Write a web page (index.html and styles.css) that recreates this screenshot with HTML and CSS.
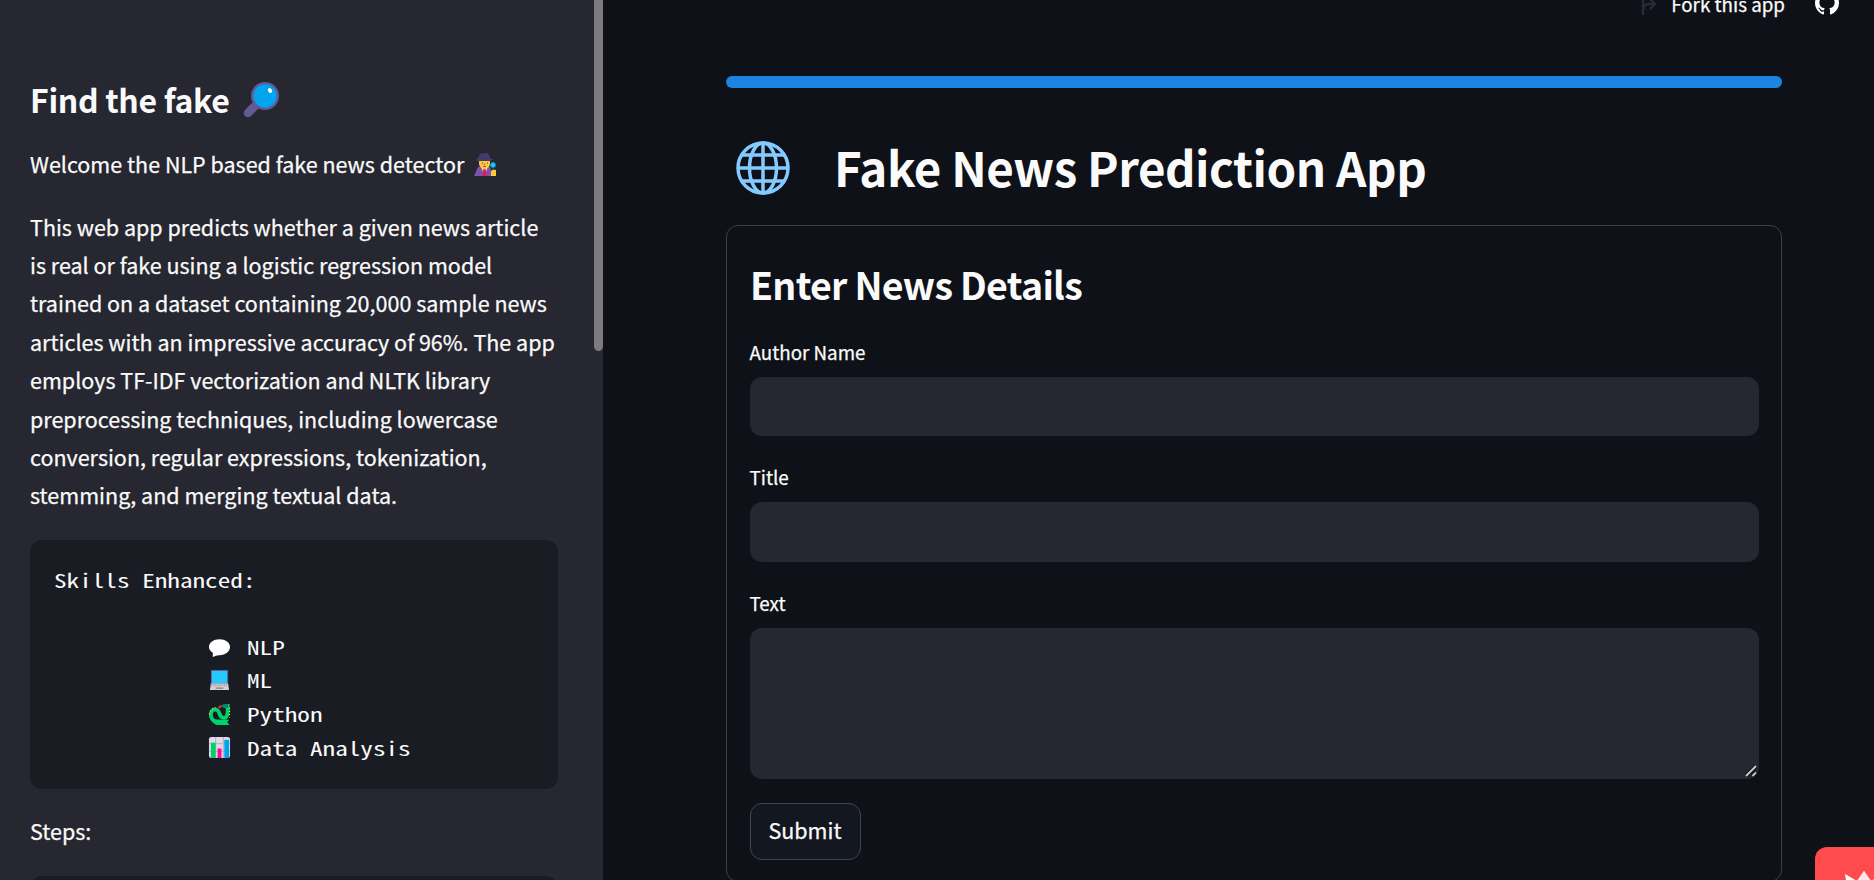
FILE: index.html
```html
<!DOCTYPE html>
<html lang="en">
<head>
<meta charset="utf-8">
<title>Fake News Prediction App</title>
<link rel="stylesheet" href="styles.css">
</head>
<body>
<div class="app">
  <aside class="sidebar">
    <h2 class="side-title"><span>Find the fake</span>
      <svg class="lens" viewBox="0 0 36 36"><path d="M5 31L14 22" stroke="#635994" stroke-width="8.500" stroke-linecap="round"/><circle cx="22" cy="14" r="14" fill="#635994"/><circle cx="22" cy="14" r="11.700" fill="#00a6ed"/><ellipse cx="27" cy="8.500" rx="1.900" ry="2.700" transform="rotate(-30 27 8.500)" fill="#fff"/></svg>
    </h2>
    <p class="welcome"><span>Welcome the NLP based fake news detector</span>
      <svg class="detective" viewBox="0 0 22 24"><path d="M0 23L3 16Q4 13 8 13H14Q17 14 17 18V23Z" fill="#7d52ad"/><path d="M7 13L10.500 23L14 13Z" fill="#f4edf8"/><path d="M9.500 15h2l1 8h-4z" fill="#e21b55"/><path d="M5 6h11v5q-1 5-5.500 5T5 11z" fill="#ffc83d"/><path d="M2 7Q5 5 5 3Q6 0 8 0Q10 1 11 0Q15-1 16 4Q16 6 19 6Q19 8 13 8H5Q2 8 2 7Z" fill="#433b6b"/><path d="M8 10h1m4 0h1" stroke="#433b6b"/><circle cx="10.500" cy="11.500" r="1" fill="#d67d00"/><path d="M9 13.500h3" stroke="#c85720"/><circle cx="19" cy="12" r="2.500" fill="#26c9fc" stroke="#008ebf"/><path d="M19 15v3" stroke="#433b6b" stroke-width="1.500"/><path d="M17 18q2-2 5-1v6h-5z" fill="#ffc83d"/></svg>
    </p>
    <p class="about">This web app predicts whether a given news article<br>is real or fake using a logistic regression model<br>trained on a dataset containing 20,000 sample news<br>articles with an impressive accuracy of 96%. The app<br>employs TF-IDF vectorization and NLTK library<br>preprocessing techniques, including lowercase<br>conversion, regular expressions, tokenization,<br>stemming, and merging textual data.</p>
    <div class="code">
      <div class="code-head"><span class="mono">Skills Enhanced:</span></div>
      <ul class="skills">
        <li><svg class="emoji" viewBox="0 0 24 24"><path d="M12 3.500C18 3.500 23 7 23 11.500S18 20 12 20Q9 20 7 21L5 22V17.500Q1 15 1 11.500C1 7 6 3.500 12 3.500Z" fill="#fff"/></svg><span class="mono">NLP</span></li>
        <li><svg class="emoji" viewBox="0 0 24 24"><rect x="3" y="1" width="18" height="15" fill="#635994"/><rect x="4" y="2" width="16" height="13" fill="#26c9fc"/><path d="M3 15h18l1 7H2z" fill="#d3d3d3"/><path d="M3 17h18" stroke="#9b9b9b" stroke-width="2" stroke-dasharray="1 1"/><path d="M8 20h8" stroke="#888" stroke-width="1.500"/></svg><span class="mono">ML</span></li>
        <li><svg class="emoji" viewBox="0 0 24 24"><path d="M13 19.500H11C5 19.500 3 16 3 12.500C3 8 6 6 9 7C13 8.500 11 15 16 15.500C20 15.500 20.500 12 20.500 9V3H16" fill="none" stroke="#00d26a" stroke-width="4"/><path d="M9 17.500H22L20 20L22.500 23H12Q7 23 5 20Z" fill="#00d26a"/><path d="M13 4L16 1H21V5Z" fill="#008463"/><path d="M14 3L11 5" stroke="#f8312f" stroke-width="2"/><path d="M22.500 5v10M1.500 12Q2 6 8 5" fill="none" stroke="#fcd53f" stroke-width="1.200" stroke-dasharray="1.200 2"/></svg><span class="mono">Python</span></li>
        <li><svg class="emoji" viewBox="0 0 24 24"><rect x="1" y="1" width="22" height="22" rx="2.500" fill="#e1d8ec"/><path d="M8 1v22M16 1v22M1 8h22M1 16h22" stroke="#b4acbc"/><path d="M3 7h5v16H3z" fill="#00d26a"/><path d="M10 13h4v10h-4z" fill="#f70a8d"/><path d="M17 4h5v19h-5z" fill="#00a6ed"/></svg><span class="mono">Data Analysis</span></li>
      </ul>
    </div>
    <p class="steps">Steps:</p>
    <div class="code code-next"></div>
    <div class="scroll-thumb"></div>
  </aside>
  <main class="main">
    <header class="toolbar">
      <svg class="fork" viewBox="0 0 16 24"><path d="M2 24V4M2 21Q2 13 8 13H13M9 8l5 5-5 5" fill="none" stroke="#292b34" stroke-width="2.400"/></svg>
      <span class="fork-label">Fork this app</span>
      <svg class="github" viewBox="0 0 16 16"><path fill="#fff" d="M8 0C3.580 0 0 3.580 0 8c0 3.540 2.290 6.530 5.470 7.590.4.070.55-.17.55-.38 0-.19-.01-.82-.01-1.490-2.010.37-2.530-.49-2.690-.94-.09-.23-.48-.94-.82-1.130-.28-.15-.68-.52-.01-.53.63-.01 1.080.58 1.230.82.72 1.210 1.870.87 2.330.66.07-.52.28-.87.51-1.070-1.780-.2-3.640-.89-3.640-3.950 0-.87.31-1.590.82-2.150-.08-.2-.36-1.020.08-2.120 0 0 .67-.21 2.200.82.64-.18 1.320-.27 2-.27s1.360.09 2 .27c1.530-1.040 2.200-.82 2.200-.82.44 1.100.16 1.920.08 2.120.51.56.82 1.270.82 2.150 0 3.070-1.870 3.750-3.650 3.950.29.25.54.73.54 1.480 0 1.070-.01 1.930-.01 2.200 0 .21.15.46.55.38A8.010 8.010 0 0 0 16 8c0-4.420-3.580-8-8-8z"/></svg>
    </header>
    <div class="content">
      <div class="progress"></div>
      <div class="hero">
        <svg class="globe" viewBox="0 0 54 54" fill="none" stroke="#83cbff" stroke-width="3.500"><circle cx="27" cy="27" r="25"/><ellipse cx="27" cy="27" rx="13.500" ry="25"/><path d="M27 2v50M2 27h50M6 14h42M6 40h42"/></svg>
        <h1 class="title">Fake News Prediction App</h1>
      </div>
      <form class="form">
        <h2 class="form-title">Enter News Details</h2>
        <label class="label" for="author">Author Name</label>
        <input class="field" id="author">
        <label class="label" for="title">Title</label>
        <input class="field field-title" id="title">
        <label class="label" for="text">Text</label>
        <div class="area-wrap">
          <textarea class="field area" id="text"></textarea>
          <svg class="grip" viewBox="0 0 12 12"><path d="M1 11L11 1M7.500 11L11 7.500" stroke="#0e1117" stroke-width="4"/><path d="M1 11L11 1M7.500 11L11 7.500" stroke="#c9c9cb" stroke-width="1.900"/></svg>
        </div>
        <button class="submit" type="button">Submit</button>
      </form>
    </div>
  </main>
  <div class="badge"><svg class="crown" viewBox="0 0 60 40"><path d="M0 3L12 10L19 0L26 10L38 3L34 40H6Z" fill="#fff"/><path d="M12 10L19 0L26 10L24 40H14Z" fill="#ffe3e8"/></svg></div>
</div>
</body>
</html>
```
FILE: styles.css
```css
* { box-sizing: border-box; }
body {
  margin: 0;
  overflow: hidden;
  background: #0e1117;
  color: #fafafa;
  font-family: "Source Sans Pro", "Noto Sans CJK SC", sans-serif;
  font-size: 21.5px;
  -webkit-text-stroke: 0.25px currentColor;
}
h1, h2, p, ul { margin: 0; padding: 0; }
h1, h2 { -webkit-text-stroke: 0; }
svg { display: block; flex: none; }
.app { position: relative; display: flex; width: 1874px; height: 880px; overflow: hidden; }
.sidebar {
  position: relative;
  width: 603px;
  height: 880px;
  flex: none;
  overflow: hidden;
  padding: 78px 45px 0 30px;
  background: #262730;
  white-space: nowrap;
}
.side-title { display: flex; align-items: center; gap: 14px; height: 43px; font-size: 32px; font-weight: 600; line-height: 43px; letter-spacing: -0.33px; }
.lens { width: 36px; height: 36px; margin-top: 1px; }
.welcome { display: flex; align-items: center; gap: 10px; height: 38px; margin-top: 24px; line-height: 38px; }
.detective { width: 22px; height: 24px; margin-top: 2px; }
.about { margin-top: 24.5px; line-height: 38.4px; }
.code {
  height: 249px;
  margin-top: 25.3px;
  padding: 24px;
  border-radius: 12px;
  background: #1a1c24;
  font-family: "Noto Sans Mono CJK SC", "DejaVu Sans Mono", monospace;
  font-size: 19.2px;
  line-height: 33.6px;
}
/* Widens the half-width Latin glyphs to a 12.6px advance */
.mono { display: inline-block; transform: scaleX(1.3125); transform-origin: 0 50%; -webkit-text-stroke: 0; }
.code-head { height: 66.8px; }
.skills { list-style: none; }
.skills li { display: flex; align-items: center; gap: 16px; height: 33.6px; padding-left: 154px; }
.emoji { width: 23px; height: 23px; margin-top: -1px; }
.steps { height: 38px; margin-top: 23px; line-height: 38px; }
.code-next { margin-top: 26px; }
.scroll-thumb { position: absolute; top: 0; right: 0; width: 9px; height: 351px; border-radius: 0 0 5px 5px; background: #7c7b80; }
.main { flex: 1; padding: 0 35px 0 123px; }
.toolbar { display: flex; justify-content: flex-end; align-items: flex-start; height: 76px; font-size: 18.8px; line-height: 28px; }
.toolbar > * { position: relative; top: -9px; }
.toolbar > .fork-label { top: -10px; }
.fork { width: 16px; height: 24px; margin-right: 14px; }
.github { width: 24px; height: 24px; margin-left: 30px; }
.content { width: 1056px; }
.progress { height: 12px; border-radius: 6px; background: #1c83e1; }
.hero { display: flex; align-items: center; height: 137px; padding: 23px 0 0 10px; }
.globe { width: 54px; height: 54px; margin-bottom: 1px; }
.title { margin: 0 0 2px 44px; font-size: 47.5px; font-weight: 600; line-height: 64px; letter-spacing: -0.48px; white-space: nowrap; }
.form { height: 657px; padding: 34px 23px 0; border: 1px solid #3d4044; border-radius: 12px; }
.form-title { height: 48px; margin-bottom: 26px; font-size: 37.5px; font-weight: 600; line-height: 48px; letter-spacing: -0.72px; }
.label { display: block; height: 36px; margin: 0 0 7px -0.5px; font-size: 18.8px; line-height: 36px; }
.field { display: block; width: 1009px; height: 59px; margin: 0 0 23px; padding: 12px; border: 0; border-radius: 12px; background: #262730; color: #fafafa; resize: none; outline: 0; }
.field-title { height: 60px; }
.area-wrap { position: relative; width: 1009px; }
.area { height: 151px; margin-bottom: 24px; }
.grip { position: absolute; right: 2px; bottom: 2px; width: 12px; height: 12px; }
.submit { display: block; width: 111px; height: 57px; padding: 0 1px 3px 0; border: 1px solid #42444b; border-radius: 12px; background: #131720; color: #fafafa; font: inherit; line-height: 38px; -webkit-text-stroke: 0.25px currentColor; }
.badge { position: absolute; right: 0; bottom: 0; width: 59px; height: 33px; overflow: hidden; padding: 24px 0 0 30px; border-radius: 12px 0 0; background: #ff4b4b; }
.crown { width: 60px; height: 40px; }
```
